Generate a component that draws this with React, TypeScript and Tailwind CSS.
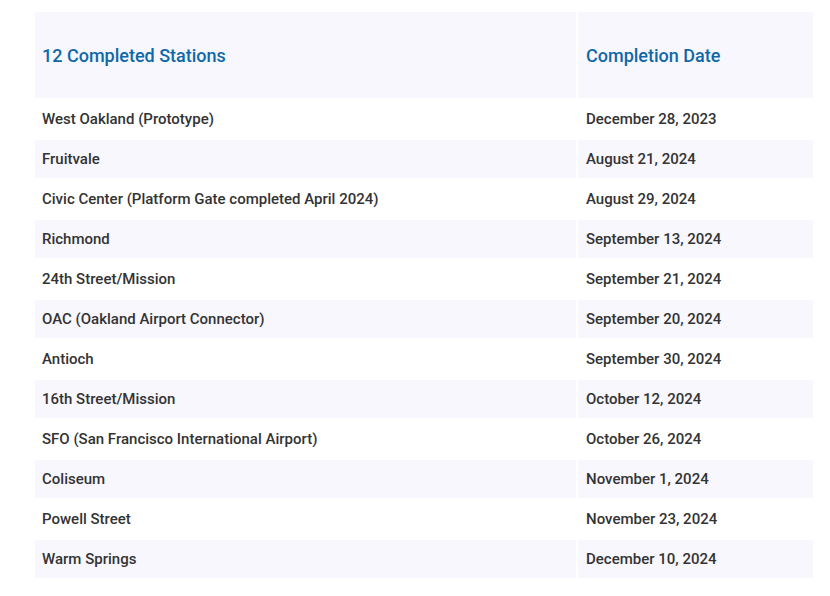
import React from "react";

const ROWS = [
  ["West Oakland (Prototype)", "December 28, 2023"],
  ["Fruitvale", "August 21, 2024"],
  ["Civic Center (Platform Gate completed April 2024)", "August 29, 2024"],
  ["Richmond", "September 13, 2024"],
  ["24th Street/Mission", "September 21, 2024"],
  ["OAC (Oakland Airport Connector)", "September 20, 2024"],
  ["Antioch", "September 30, 2024"],
  ["16th Street/Mission", "October 12, 2024"],
  ["SFO (San Francisco International Airport)", "October 26, 2024"],
  ["Coliseum", "November 1, 2024"],
  ["Powell Street", "November 23, 2024"],
  ["Warm Springs", "December 10, 2024"],
];

export default function App() {
  return (
    <div className="min-h-screen bg-white pt-[10px] pl-[33px] font-['Roboto',sans-serif]">
      <table className="w-[782px] border-separate border-spacing-[2px] text-[15px] font-medium text-[#333333]">
        <thead>
          <tr className="bg-[#f8f7fe]">
            <th className="h-[86px] w-[541px] px-[7px] text-left text-[18px] font-medium text-[#0f68a9]">
              12 Completed Stations
            </th>
            <th className="h-[86px] px-[8px] text-left text-[18px] font-medium text-[#0f68a9]">
              Completion Date
            </th>
          </tr>
        </thead>
        <tbody>
          {ROWS.map(([name, date], idx) => (
            <tr key={name} className={idx % 2 ? "bg-[#f8f7fe]" : ""}>
              <td className="h-[38px] px-[7px]">{name}</td>
              <td className="h-[38px] px-[8px]">{date}</td>
            </tr>
          ))}
        </tbody>
      </table>
    </div>
  );
}
